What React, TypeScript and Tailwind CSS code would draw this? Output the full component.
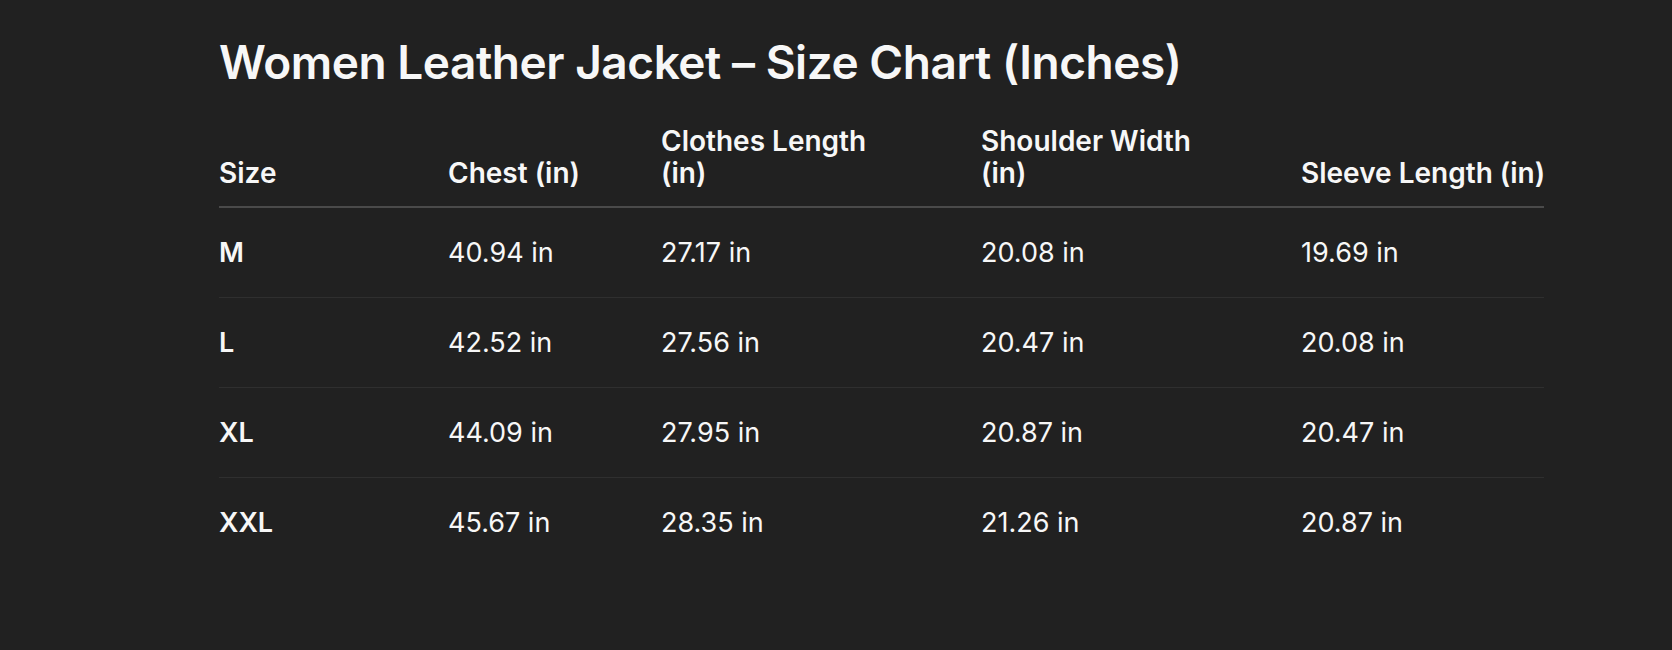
const headers = ["Size", "Chest (in)", "Clothes Length (in)", "Shoulder Width (in)", "Sleeve Length (in)"];

const rows = [
  ["M", "40.94 in", "27.17 in", "20.08 in", "19.69 in"],
  ["L", "42.52 in", "27.56 in", "20.47 in", "20.08 in"],
  ["XL", "44.09 in", "27.95 in", "20.87 in", "20.47 in"],
  ["XXL", "45.67 in", "28.35 in", "21.26 in", "20.87 in"],
];

const cols = "grid grid-cols-[229px_213px_320px_320px_243px]";

export default function App() {
  return (
    <div className="min-h-[650px] w-full bg-[#212121] text-[#f7f7f7] font-['Inter',sans-serif]">
      <div className="pl-[219px] pt-[35px]">
        <h1 className="text-[46px] leading-[1.2] font-semibold tracking-[-0.01em]">
          Women Leather Jacket – Size Chart (Inches)
        </h1>

        <div className="mt-[35px] w-[1325px]">
          {/* Header */}
          <div className={`${cols} items-end border-b-2 border-[#4a4a4a] pb-[17px]`}>
            {headers.map((h, i) => (
              <div
                key={h}
                className={`text-[28px] leading-[32px] font-semibold ${i === 2 || i === 3 ? "pr-[90px]" : "whitespace-nowrap"}`}
              >
                {h}
              </div>
            ))}
          </div>

          {/* Body */}
          {rows.map((r, ri) => (
            <div
              key={r[0]}
              className={`${cols} h-[90px] items-center ${ri < rows.length - 1 ? "border-b border-[#2f2f2f]" : ""}`}
            >
              {r.map((c, ci) => (
                <div
                  key={ci}
                  className={`text-[27px] leading-[32px] whitespace-nowrap ${ci === 0 ? "font-semibold" : "font-normal"}`}
                >
                  {c}
                </div>
              ))}
            </div>
          ))}
        </div>
      </div>
    </div>
  );
}
